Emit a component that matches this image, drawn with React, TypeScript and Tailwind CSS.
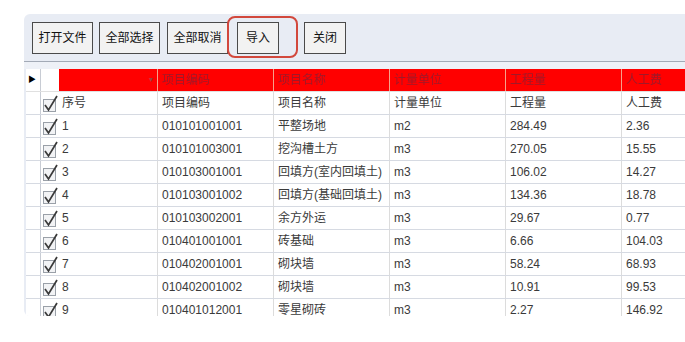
const cols = ['项目编码', '项目名称', '计量单位', '工程量', '人工费'];

const rows = [
  ['序号', '项目编码', '项目名称', '计量单位', '工程量', '人工费'],
  ['1', '010101001001', '平整场地', 'm2', '284.49', '2.36'],
  ['2', '010101003001', '挖沟槽土方', 'm3', '270.05', '15.55'],
  ['3', '010103001001', '回填方(室内回填土)', 'm3', '106.02', '14.27'],
  ['4', '010103001002', '回填方(基础回填土)', 'm3', '134.36', '18.78'],
  ['5', '010103002001', '余方外运', 'm3', '29.67', '0.77'],
  ['6', '010401001001', '砖基础', 'm3', '6.66', '104.03'],
  ['7', '010402001001', '砌块墙', 'm3', '58.24', '68.93'],
  ['8', '010402001002', '砌块墙', 'm3', '10.91', '99.53'],
  ['9', '010401012001', '零星砌砖', 'm3', '2.27', '146.92'],
];

const font = { fontFamily: '"Liberation Sans", "Noto Sans CJK SC", sans-serif' };

const Check = () => (
  <svg width="15" height="17" viewBox="0 0 15 17" className="shrink-0">
    <rect x="0.5" y="4.5" width="12" height="12" fill="#f2f3f5" stroke="#9aa0a8" />
    <path d="M2 10 L5.5 15 L14 1" fill="none" stroke="#3a3a3a" strokeWidth="1.7" />
  </svg>
);

const Btn = ({ label, w }: { label: string; w: string }) => (
  <button className={`${w} h-[32px] border border-[#4a4a4a] bg-[#f2f2f2] text-[12px] text-[#111]`}>{label}</button>
);

export default function App() {
  return (
    <div className="w-[685px] h-[342px] bg-white pt-[14px] pl-[24px] overflow-hidden" style={font}>
      <div className="h-[302px] bg-[#e8ecf4] rounded-tl-[6px] rounded-bl-[6px] overflow-hidden flex flex-col">
        <div className="h-[48px] shrink-0 flex items-start pl-[8px] pt-[8px] border-b border-[#a3aab6]">
          <Btn label="打开文件" w="w-[61px]" />
          <div className="ml-[6px]"><Btn label="全部选择" w="w-[61px]" /></div>
          <div className="ml-[7px]"><Btn label="全部取消" w="w-[61px]" /></div>
          <div className="ml-[-1px] mt-[-6px] h-[42px] border-2 border-[#d2483c] rounded-[8px] pl-[8px] pr-[17px] pt-[4px]">
            <Btn label="导入" w="w-[42px]" />
          </div>
          <div className="ml-[6px]"><Btn label="关闭" w="w-[42px]" /></div>
        </div>
        <div className="h-[7px] shrink-0 bg-[#eef1f7]" />
        <div className="flex-1 min-h-0 overflow-hidden bg-white ml-[2px] text-[12px] text-[#3a3a3a]">
          <div className="flex h-[23px] border-b border-[#e0e0e0]">
            <div className="w-[15px] shrink-0 border-r border-[#c8ccd4] flex items-center pl-[2px] text-[8px] text-black">▶</div>
            <div className="w-[117px] shrink-0 flex">
              <div className="w-[18px] bg-white" />
              <div className="flex-1 bg-[#ff0000] flex items-center justify-end pr-[4px] text-[8px] text-[#a04040] border-r border-[#f6a08a]">▾</div>
            </div>
            {cols.map((c) => (
              <div key={c} className="w-[116px] shrink-0 bg-[#ff0000] border-r border-[#f6a08a] flex items-center pl-[4px] text-[#a01828] blur-[0.6px]">
                {c}
              </div>
            ))}
          </div>
          {rows.map((r, i) => (
            <div key={i} className="flex h-[23px] border-b border-[#d6dae2]">
              <div className="w-[15px] shrink-0 border-r border-[#c8ccd4] bg-white" />
              <div className="w-[117px] shrink-0 flex items-center pl-[2px] gap-[4px] border-r border-[#dcdcdc]">
                <Check />
                <span>{r[0]}</span>
              </div>
              {r.slice(1).map((v, j) => (
                <div key={j} className="w-[116px] shrink-0 flex items-center pl-[4px] border-r border-[#dcdcdc] whitespace-nowrap">
                  {v}
                </div>
              ))}
            </div>
          ))}
        </div>
      </div>
    </div>
  );
}
